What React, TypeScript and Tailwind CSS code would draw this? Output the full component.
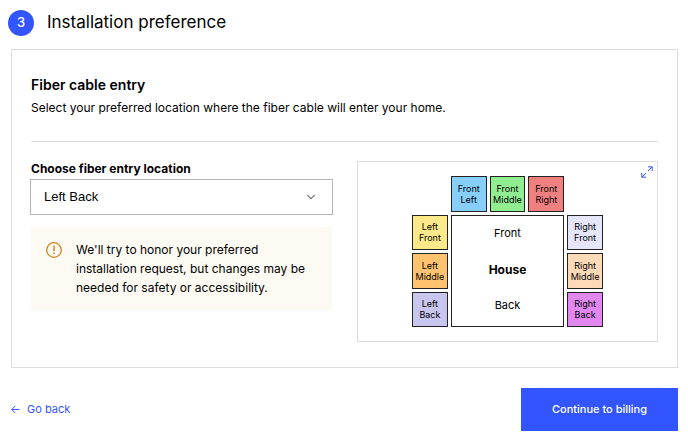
import { clsx } from 'clsx';

const locations = [
  { name: 'Front Left', lines: ['Front', 'Left'], place: 'col-start-2 row-start-1', color: 'bg-[#87cefa]' },
  { name: 'Front Middle', lines: ['Front', 'Middle'], place: 'col-start-3 row-start-1', color: 'bg-[#90ee90]' },
  { name: 'Front Right', lines: ['Front', 'Right'], place: 'col-start-4 row-start-1', color: 'bg-[#f08080]' },
  { name: 'Left Front', lines: ['Left', 'Front'], place: 'col-start-1 row-start-2', color: 'bg-[#fde98a]' },
  { name: 'Left Middle', lines: ['Left', 'Middle'], place: 'col-start-1 row-start-3', color: 'bg-[#ffc370]' },
  { name: 'Left Back', lines: ['Left', 'Back'], place: 'col-start-1 row-start-4', color: 'bg-[#c8c6ee]' },
  { name: 'Right Front', lines: ['Right', 'Front'], place: 'col-start-5 row-start-2', color: 'bg-[#e6e6fa]' },
  { name: 'Right Middle', lines: ['Right', 'Middle'], place: 'col-start-5 row-start-3', color: 'bg-[#ffdab9]' },
  { name: 'Right Back', lines: ['Right', 'Back'], place: 'col-start-5 row-start-4', color: 'bg-[#e088ee]' },
];

function WarningIcon() {
  return (
    <svg className="size-4 shrink-0 text-[#d0851a]" viewBox="0 0 16 16" fill="none" stroke="currentColor" aria-hidden="true">
      <circle cx="8" cy="8" r="7.3" strokeWidth="1.3" />
      <path d="M8 3.6v5.6" strokeWidth="1.5" />
      <path d="M8 10.7v1.5" strokeWidth="1.6" />
    </svg>
  );
}

function ExpandIcon() {
  return (
    <svg className="size-3" viewBox="0 0 12 12" fill="none" stroke="currentColor" strokeWidth="1" aria-hidden="true">
      <path d="M7 .8h4.2V5M11 1 7 5M5 11.2H.8V7M1 11l4-4" />
    </svg>
  );
}

function HouseDiagram() {
  return (
    <div className="relative flex justify-center border border-[#dcdcdc] pt-[14px] pb-[14px]">
      <div className="grid h-[151px] w-[191px] grid-cols-5 grid-rows-4 gap-[3px] text-[9px] leading-[11px] text-black">
        {locations.map(({ name, lines, place, color }) => (
          <div
            key={name}
            className={clsx('flex flex-col items-center justify-center border border-[#222]', place, color)}
          >
            {lines.map((line) => (
              <span key={line}>{line}</span>
            ))}
          </div>
        ))}
        <div className="col-span-3 col-start-2 row-span-3 row-start-2 flex flex-col items-center justify-around border border-[#222] pb-[2px] text-[11px]">
          <span>Front</span>
          <strong className="text-[12px] font-bold">House</strong>
          <span>Back</span>
        </div>
      </div>
      <button type="button" aria-label="Expand diagram" className="absolute top-1 right-1 text-[#3355ff]">
        <ExpandIcon />
      </button>
    </div>
  );
}

export default function App() {
  return (
    <main className="bg-white pr-[10px] pb-[5px] font-['Inter',sans-serif] text-[13px] text-black">
      {/* Step header */}
      <header className="flex items-center gap-[13px] pt-[10px] pl-2">
        <span className="flex size-[26px] items-center justify-center rounded-full bg-[#3355ff] font-medium text-white">
          3
        </span>
        <h1 className="pb-[2px] text-[17px] leading-6">Installation preference</h1>
      </header>

      <form className="ml-[11px]">
        <section className="mt-[13px] border border-[#dcdcdc] px-[19px] pt-[25px] pb-[25px]">
          <h2 className="text-[14px] leading-5 font-semibold">Fiber cable entry</h2>
          <p className="mt-[3px] text-[12px] leading-5">
            Select your preferred location where the fiber cable will enter your home.
          </p>
          <hr className="mt-[23px] border-[#dcdcdc]" />

          <div className="mt-[19px] grid grid-cols-2 gap-[25px]">
            <div className="-mx-px">
              <label htmlFor="entry-location" className="mb-[2px] block pl-px text-[12px] leading-4 font-bold">
                Choose fiber entry location
              </label>
              <div className="relative">
                <select
                  id="entry-location"
                  defaultValue="Left Back"
                  className="h-9 w-full appearance-none border border-[#b5b5b5] bg-white pl-[13px] font-['Liberation_Sans',sans-serif] text-[13px]"
                >
                  {locations.map(({ name }) => (
                    <option key={name}>{name}</option>
                  ))}
                </select>
                <svg
                  className="pointer-events-none absolute top-[14px] right-[17px] h-2 w-[10px] text-[#777]"
                  viewBox="0 0 10 8"
                  fill="none"
                  stroke="currentColor"
                  strokeWidth="1.2"
                  aria-hidden="true"
                >
                  <path d="m1.2 1.8 3.8 3.8 3.8-3.8" />
                </svg>
              </div>
              <div className="mx-px mt-3 flex gap-[14px] bg-[#fdfaf3] py-[13px] pr-4 pl-[15px]">
                <span className="pt-[2px]">
                  <WarningIcon />
                </span>
                <p className="text-[12px] leading-[19px]">
                  We'll try to honor your preferred installation request, but changes may be needed for safety or
                  accessibility.
                </p>
              </div>
            </div>
            <HouseDiagram />
          </div>
        </section>

        <div className="mt-5 flex items-center justify-between">
          <a href="#billing" className="flex items-center gap-[7px] text-[11px] text-[#3355ff]">
            <svg className="size-[9px]" viewBox="0 0 9 9" fill="none" stroke="currentColor" aria-hidden="true">
              <path d="M8.5 4.5H.8M4.2 1 .8 4.5 4.2 8" />
            </svg>
            Go back
          </a>
          <button type="submit" className="h-[43px] bg-[#3355ff] px-[31px] text-[11px] font-medium text-white">
            Continue to billing
          </button>
        </div>
      </form>
    </main>
  );
}
